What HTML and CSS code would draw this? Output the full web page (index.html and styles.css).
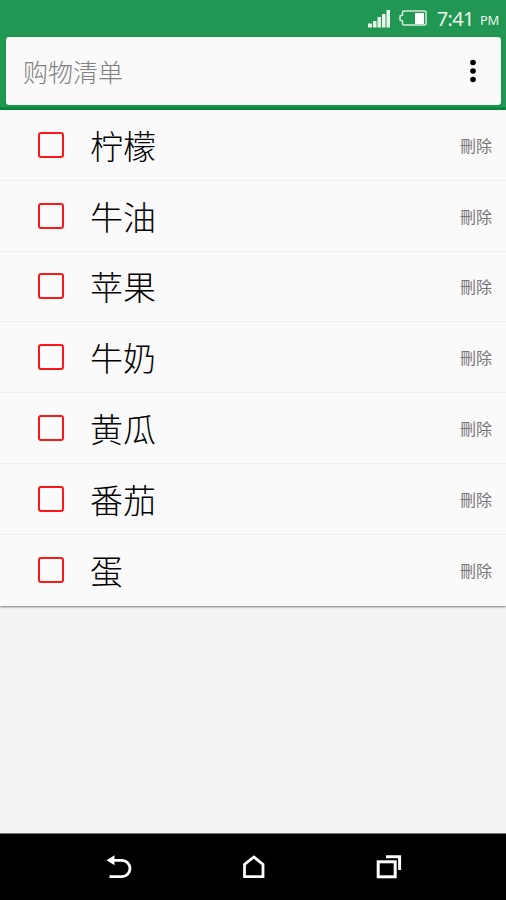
FILE: index.html
```html
<!DOCTYPE html>
<html lang="zh-CN">
<head>
    <meta charset="UTF-8">
    <meta name="viewport" content="width=device-width, initial-scale=1.0">
    <title>购物清单</title>
    <link rel="stylesheet" href="styles.css">
</head>
<body>
    <header class="header">
        <div class="status">
            <svg class="signal" width="22" height="19" viewBox="0 0 22 19" fill="#e9f6ea">
                <rect x="0" y="14.500" width="4" height="4"/>
                <rect x="5" y="12" width="3.500" height="6.500"/>
                <rect x="9.500" y="8" width="3.500" height="10.500"/>
                <rect x="14" y="5" width="3.500" height="13.500"/>
                <rect x="18.500" y="1" width="3.500" height="17.500"/>
            </svg>
            <svg class="battery" width="28" height="16" viewBox="0 0 28 16">
                <path d="M5 1h20.500q1.500 0 1.500 1.500v11q0 1.500-1.500 1.500H5q-1.500 0-1.500-1.500V11L1 10V6l2.500-1V2.500Q3.500 1 5 1z" fill="none" stroke="#d5ecd7" stroke-width="1.500"/>
                <rect x="16" y="3" width="9" height="11" fill="#fff"/>
            </svg>
            <span class="time">7:41</span>
            <span class="ampm">PM</span>
        </div>
        <div class="toolbar">
            <h1>购物清单</h1>
            <svg width="8" height="24" viewBox="0 0 8 24" fill="#000">
                <circle cx="4" cy="3.500" r="2.800"/>
                <circle cx="4" cy="12" r="2.800"/>
                <circle cx="4" cy="20.500" r="2.800"/>
            </svg>
        </div>
    </header>

    <ul class="list">
        <li><span class="check"></span><span class="name">柠檬</span><span class="delete">刪除</span></li>
        <li><span class="check"></span><span class="name">牛油</span><span class="delete">刪除</span></li>
        <li><span class="check"></span><span class="name">苹果</span><span class="delete">刪除</span></li>
        <li><span class="check"></span><span class="name">牛奶</span><span class="delete">刪除</span></li>
        <li><span class="check"></span><span class="name">黄瓜</span><span class="delete">刪除</span></li>
        <li><span class="check"></span><span class="name">番茄</span><span class="delete">刪除</span></li>
        <li><span class="check"></span><span class="name">蛋</span><span class="delete">刪除</span></li>
    </ul>

    <nav class="navbar">
        <svg width="26" height="26" viewBox="0 0 26 26" fill="none" stroke="#fff" stroke-width="2.800">
            <path d="M7 6.300h9a8 8.200 0 0 1 0 16.400H3.500"/>
            <path d="M0.500 6.300L8.500 1.300v10z" fill="#fff" stroke="none"/>
        </svg>
        <svg width="26" height="26" viewBox="0 0 26 26" fill="none" stroke="#fff" stroke-width="2.800">
            <path d="M3.500 22.700V10.500L12.800 3l9.200 7.500v12.200z"/>
        </svg>
        <svg width="26" height="26" viewBox="0 0 26 26" fill="none" stroke="#fff" stroke-width="3">
            <rect x="2.200" y="7.800" width="17" height="15"/>
            <path d="M10 2.800h13.600v13.200"/>
        </svg>
    </nav>
</body>
</html>
```

FILE: styles.css
```css
* {
    box-sizing: border-box;
}
body {
    display: flex;
    flex-direction: column;
    height: 900px;
    margin: 0;
    background-color: #f1f3f5;
    font-family: "Noto Sans CJK SC", sans-serif;
    font-weight: 300;
}
svg {
    display: block;
}
.header {
    height: 110px;
    padding: 0 5px 0 6px;
    background-color: #229653;
    border-bottom: 3px solid #098a3e;
}
.status {
    display: flex;
    align-items: center;
    height: 37px;
    padding-right: 2px;
    justify-content: flex-end;
    color: #edf8ee;
    font-family: "Noto Sans", sans-serif;
    font-weight: 400;
    line-height: 1;
}
.signal {
    margin-top: -1px;
}
.battery {
    margin: -1px 0 0 9px;
}
.time {
    margin-left: 10px;
    font-size: 20px;
    letter-spacing: -0.6px;
}
.ampm {
    margin: 4px 0 0 6px;
    font-size: 13px;
    letter-spacing: -0.3px;
}
.toolbar {
    display: flex;
    align-items: center;
    justify-content: space-between;
    height: 68px;
    padding: 0 24px 0 17px;
    background-color: #fafafa;
    border-radius: 3px;
    box-shadow: 0 0 2px #008436;
}
.toolbar h1 {
    margin: 0;
    color: #808080;
    font-size: 25px;
    font-weight: 300;
}
.list {
    margin: 0;
    padding: 0;
    list-style: none;
    background-color: #fafafa;
    box-shadow: 0 1px 2px rgba(0,0,0,0.5);
}
.list li {
    display: flex;
    align-items: center;
    height: 70.8px;
    padding: 0 14px 0 38px;
    border-bottom: 1px solid #f0f0f0;
}
.list li:last-child {
    border-bottom: none;
}
.check {
    width: 26px;
    height: 26px;
    border: 2px solid #fa1818;
    border-radius: 3px;
}
.name {
    flex: 1;
    padding-top: 1px;
    margin-left: 26px;
    color: #000;
    font-size: 33px;
    line-height: 1;
}
.delete {
    color: #777;
    font-family: "Noto Sans CJK TC", sans-serif;
    font-size: 16px;
    font-weight: 400;
}
.navbar {
    display: flex;
    align-items: center;
    justify-content: space-between;
    height: 67px;
    margin-top: auto;
    padding: 0 104px 0 106px;
    background-color: #000;
    border-top: 1px solid #777;
}
```
